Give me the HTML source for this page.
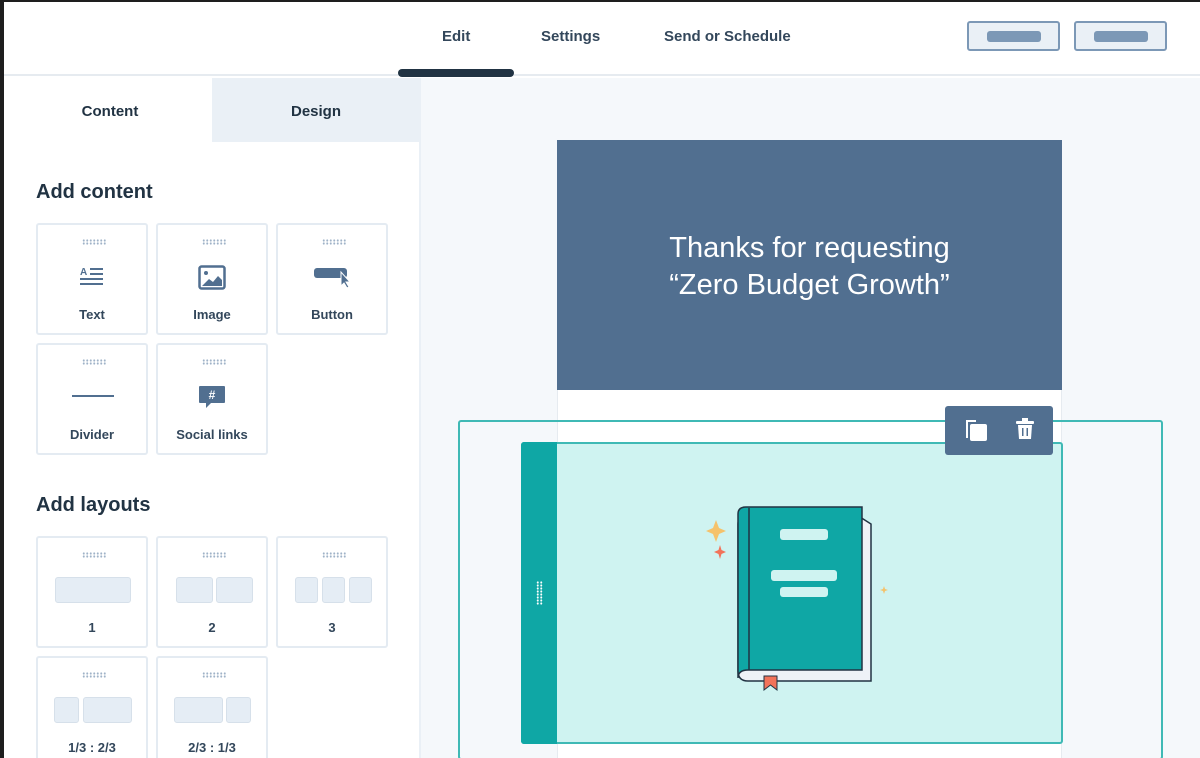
<!DOCTYPE html>
<html style="width:1200px;height:758px;overflow:hidden"><head><meta charset="utf-8"><style>
*{box-sizing:border-box;margin:0;padding:0}
body{width:1200px;height:758px;overflow:hidden;background:#1e1e1e;font-family:"Liberation Sans",sans-serif;color:#213343;position:relative}
.abs{position:absolute}
#app{position:absolute;left:4px;top:2px;right:0;bottom:0;background:#fff}
.tile{position:absolute;width:112px;height:112px;border:2px solid #e4ebf2;border-radius:3px;background:#fff}
.dots{position:absolute;left:44px;top:14px;width:24px;height:6px;background-image:radial-gradient(circle,#9fb2c7 0.9px,transparent 1.1px);background-size:3.5px 3px}
.lbl{position:absolute;left:0;right:0;top:82px;text-align:center;font-weight:bold;font-size:13px;color:#33475b}
.ico{position:absolute;left:0;right:0;top:40px;display:flex;justify-content:center}
.bx{background:#e5edf5;border:1.5px solid #d6e0ea;border-radius:3px;height:26px;position:absolute;top:39px}
h2{position:absolute;font-size:20px;font-weight:bold;color:#213343}
</style></head><body>
<div id="app">
 <div class="abs" style="left:0;top:0;width:1196px;height:74px;border-bottom:2px solid #e6ebf0;background:#fff"></div>
 <div class="abs" style="left:438px;top:26px;font-size:15px;font-weight:bold;color:#33475b">Edit</div>
 <div class="abs" style="left:537px;top:26px;font-size:15px;font-weight:bold;color:#33475b">Settings</div>
 <div class="abs" style="left:660px;top:26px;font-size:15px;font-weight:bold;color:#33475b">Send or Schedule</div>
 <div class="abs" style="left:394px;top:67px;width:116px;height:8px;background:#213343;border-radius:4px"></div>
 <div class="abs" style="left:963px;top:19px;width:93px;height:30px;background:#eaf0f6;border:2px solid #7c98b6;border-radius:3px"><div style="margin:8px auto;width:54px;height:11px;background:#7c98b6;border-radius:3px"></div></div>
 <div class="abs" style="left:1070px;top:19px;width:93px;height:30px;background:#eaf0f6;border:2px solid #7c98b6;border-radius:3px"><div style="margin:8px auto;width:54px;height:11px;background:#7c98b6;border-radius:3px"></div></div>
 <div class="abs" style="left:208px;top:76px;width:208px;height:64px;background:#eaf0f6"></div>
 <div class="abs" style="left:0;top:101px;width:212px;text-align:center;font-size:15px;font-weight:bold">Content</div>
 <div class="abs" style="left:208px;top:101px;width:208px;text-align:center;font-size:15px;font-weight:bold">Design</div>
 <div class="abs" style="left:415px;top:76px;width:2px;height:680px;background:#eaf0f6"></div>
 <h2 style="left:32px;top:179px">Add content</h2>
 <h2 style="left:32px;top:492px">Add layouts</h2>
</div>
<div class="tile" style="left:36px;top:223px"><div class="dots"></div><div class="ico"><svg width="26" height="24" viewBox="0 0 26 24"><text x="1" y="10" font-size="10" font-weight="bold" fill="#516f90" font-family="Liberation Sans">A</text><rect x="11" y="3" width="13" height="2" fill="#516f90"/><rect x="11" y="8" width="13" height="2" fill="#516f90"/><rect x="1" y="13" width="23" height="2" fill="#516f90"/><rect x="1" y="18" width="23" height="2" fill="#516f90"/></svg></div><div class="lbl">Text</div></div>
<div class="tile" style="left:156px;top:223px"><div class="dots"></div><div class="ico"><svg width="28" height="26" viewBox="0 0 28 26"><rect x="1.5" y="1.5" width="25" height="22" rx="2" fill="none" stroke="#516f90" stroke-width="2.5"/><circle cx="8" cy="8" r="2" fill="#516f90"/><path d="M4 21 L11 14 L15 17 L20 11 L24 15 L24 21Z" fill="#516f90"/></svg></div><div class="lbl">Image</div></div>
<div class="tile" style="left:276px;top:223px"><div class="dots"></div><div class="ico"><svg width="38" height="24" viewBox="0 0 38 24"><rect x="1" y="3" width="33" height="10" rx="3" fill="#516f90"/><path d="M28 7 L28 21 L31 18 L34 23 L36 22 L33 17 L37 17Z" fill="#516f90" stroke="#fff" stroke-width="1"/></svg></div><div class="lbl">Button</div></div>
<div class="tile" style="left:36px;top:343px"><div class="dots"></div><div style="position:absolute;left:34px;top:50px;width:42px;height:2px;background:#516f90"></div><div class="lbl">Divider</div></div>
<div class="tile" style="left:156px;top:343px"><div class="dots"></div><div class="ico"><svg width="28" height="26" viewBox="0 0 28 26"><path d="M2 1 H26 Q27 1 27 2 V17 Q27 18 26 18 H13 L8 23 V18 H2 Q1 18 1 17 V2 Q1 1 2 1Z" fill="#516f90"/><text x="14" y="14" text-anchor="middle" font-size="12" font-weight="bold" fill="#fff" font-family="Liberation Sans">#</text></svg></div><div class="lbl">Social links</div></div>
<div class="tile" style="left:36px;top:536px"><div class="dots"></div><div class="bx" style="left:17px;width:76px"></div><div class="lbl">1</div></div>
<div class="tile" style="left:156px;top:536px"><div class="dots"></div><div class="bx" style="left:18px;width:37px"></div><div class="bx" style="left:58px;width:37px"></div><div class="lbl">2</div></div>
<div class="tile" style="left:276px;top:536px"><div class="dots"></div><div class="bx" style="left:17px;width:23px"></div><div class="bx" style="left:44px;width:23px"></div><div class="bx" style="left:71px;width:23px"></div><div class="lbl">3</div></div>
<div class="tile" style="left:36px;top:656px"><div class="dots"></div><div class="bx" style="left:16px;width:25px"></div><div class="bx" style="left:45px;width:49px"></div><div class="lbl">1/3 : 2/3</div></div>
<div class="tile" style="left:156px;top:656px"><div class="dots"></div><div class="bx" style="left:16px;width:49px"></div><div class="bx" style="left:68px;width:25px"></div><div class="lbl">2/3 : 1/3</div></div>
<div class="abs" style="left:421px;top:78px;width:779px;height:680px;background:#f5f8fb"></div>
<div class="abs" style="left:557px;top:140px;width:505px;height:618px;background:#fff;border-left:1px solid #e6ebf0;border-right:1px solid #e6ebf0"></div>
<div class="abs" style="left:557px;top:140px;width:505px;height:250px;background:#516f90;color:#fff;text-align:center;font-size:29px;line-height:37px;padding-top:90px">Thanks for requesting<br>“Zero Budget Growth”</div>
<div class="abs" style="left:458px;top:420px;width:705px;height:340px;border:2px solid #3fb9b5;border-radius:3px"></div>
<div class="abs" style="left:521px;top:442px;width:542px;height:302px;background:#cff3f1;border:2px solid #3fb9b5;border-radius:3px"></div>
<div class="abs" style="left:521px;top:442px;width:36px;height:302px;background:#0fa7a5;border-radius:3px 0 0 3px"></div>
<div class="abs" style="left:536px;top:581px;width:7px;height:24px;background-image:radial-gradient(circle,#fff 0.9px,transparent 1.1px);background-size:3.5px 3px"></div>
<div class="abs" style="left:945px;top:406px;width:108px;height:49px;background:#516f90;border-radius:3px"></div>
<svg class="abs" style="left:964px;top:418px" width="24" height="24" viewBox="0 0 24 24"><path d="M2 2 H12 V4 H4 V20 H2Z" fill="#fff"/><rect x="6" y="6" width="17" height="17" rx="2" fill="#fff"/></svg>
<svg class="abs" style="left:1015px;top:417px" width="20" height="24" viewBox="0 0 20 24"><rect x="7" y="1" width="6" height="3" fill="#fff"/><rect x="1" y="4" width="18" height="3" rx="1" fill="#fff"/><path d="M3 8 H17 L16 22 H4Z" fill="#fff"/><rect x="7" y="11" width="1.5" height="8" fill="#516f90"/><rect x="11.5" y="11" width="1.5" height="8" fill="#516f90"/></svg>
<svg class="abs" style="left:700px;top:500px" width="200" height="195" viewBox="700 500 200 195">
<path d="M716 520 L719 528 L726 531 L719 534 L716 542 L713 534 L706 531 L713 528Z" fill="#f5c26b"/>
<path d="M720 545 L721.5 550 L726 552 L721.5 554 L720 559 L718.5 554 L714 552 L718.5 550Z" fill="#f2735a"/>
<path d="M884 586 L885 589 L888 590 L885 591 L884 594 L883 591 L880 590 L883 589Z" fill="#f5c26b"/>
<path d="M745 517 L860 517 L871 524 L871 681 L748 681 Q738 681 738 671 L738 524 Q738 517 745 517Z" fill="#eef2f7" stroke="#213343" stroke-width="1.5"/>
<path d="M746 507 L862 507 L862 670 L748 670 Q738 670 738 678 L738 514 Q738 507 746 507Z" fill="#0fa7a5" stroke="#213343" stroke-width="1.5"/>
<line x1="749" y1="508" x2="749" y2="670" stroke="#213343" stroke-width="1.5"/>
<rect x="780" y="529" width="48" height="11" rx="3" fill="#cff3f1"/>
<rect x="771" y="570" width="66" height="11" rx="3" fill="#cff3f1"/>
<rect x="780" y="587" width="48" height="10" rx="3" fill="#cff3f1"/>
<path d="M764 676 H777 V690 L770.5 685 L764 690Z" fill="#f2735a" stroke="#213343" stroke-width="1"/>
</svg>
</body></html>
